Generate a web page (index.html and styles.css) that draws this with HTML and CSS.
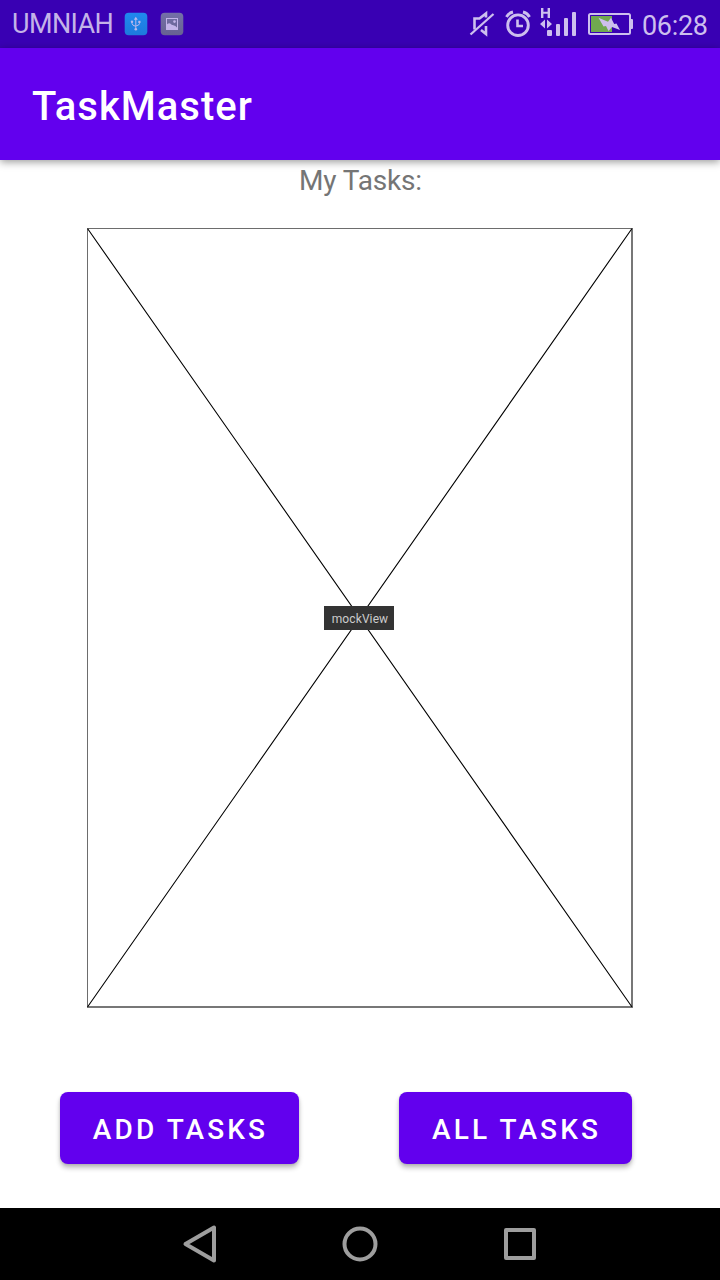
FILE: index.html
```html
<!DOCTYPE html>
<html lang="en">
<head>
<meta charset="utf-8">
<title>TaskMaster</title>
<link rel="stylesheet" href="styles.css">
</head>
<body>
<div class="screen">
  <header class="status">
    <span class="carrier">UMNIAH</span>
    <svg class="notice usb" width="24" height="24" viewBox="0 0 24 24">
      <defs><linearGradient id="blue" x2="0" y2="1"><stop stop-color="#2089ee"/><stop offset="1" stop-color="#1d79dd"/></linearGradient></defs>
      <rect x=".7" y=".7" width="22.6" height="22.6" rx="4" fill="url(#blue)"/>
      <path d="M11.8 6v11M8 9v2.4q0 2 3.8 3M15.5 10v1.4q0 2-3.7 2.6" fill="none" stroke="#b8b8ed" stroke-width="1"/>
      <path d="M11.8 4.7l2 3h-4z" fill="#b8b8ed"/><circle cx="8" cy="9.800" r="1.200" fill="#b8b8ed"/><rect x="14.300" y="8.800" width="2.200" height="2.200" fill="#b8b8ed"/><circle cx="11.800" cy="17.300" r="1.300" fill="#b8b8ed"/>
    </svg>
    <svg class="notice" width="24" height="24" viewBox="0 0 24 24">
      <defs><linearGradient id="gray" x2="0" y2="1"><stop stop-color="#7470a8"/><stop offset="1" stop-color="#676292"/></linearGradient></defs>
      <rect x=".7" y=".7" width="22.600" height="22.600" rx="4" fill="url(#gray)"/>
      <rect x="6.500" y="6.500" width="11" height="11" fill="none" stroke="#c3b4e9"/>
      <path d="M6 13.500q3-4 6-.500q3-.500 6 3.500v1.500H6z" fill="#c3b4e9"/><circle cx="14.500" cy="9.600" r="1.300" fill="#c3b4e9"/>
    </svg>
    <svg class="tray" width="170" height="48" viewBox="466 0 170 48">
      <g fill="none" stroke="#cdbfee" stroke-width="2.600">
        <path d="M470.500 34.500L493.500 14" stroke-width="2.300"/>
        <path d="M474.500 29.500V18.500h5L486 13.500v4M486 26V34L481 30"/>
        <circle cx="518" cy="25.200" r="10.300" stroke-width="2.900"/>
        <path d="M517.500 19.500V26h5.500" stroke-width="2.600"/>
        <path d="M506.500 17Q508.500 13 513 12M529.500 17Q527.500 13 523 12" stroke-width="2.900"/>
      </g>
      <g fill="#cdbfee">
        <path d="M541 8h2.400v3.800h4.200V8h2.400v10h-2.400v-4.200h-4.200V18H541z"/>
        <path d="M540 24l5-4.500v9zM552 24l-5-4.500v9z"/>
        <rect x="547" y="30" width="5" height="6" rx="1"/>
        <rect x="556" y="24" width="4" height="12" rx="1"/>
        <rect x="564" y="18" width="4" height="18" rx="1"/>
        <rect x="572" y="12" width="4" height="24" rx="1"/>
        <path d="M630.500 19h1.500q1 0 1 1v8q0 1-1 1h-1.500z"/>
      </g>
      <rect x="589" y="14" width="41" height="20" rx="1.500" fill="none" stroke="#cdbfee" stroke-width="2"/>
      <rect x="591" y="16" width="21" height="16" fill="#70a84f"/>
      <path d="M598.500 17.800l9.500 4 3-4 3.200 6.200 2.300-.500 3.500 6.500-8-3-3.500 4-2.500-5-2.500.500z" fill="#cdbfee"/>
    </svg>
    <span class="clock">06:28</span>
  </header>
  <div class="appbar"><h1 class="title">TaskMaster</h1></div>
  <main class="content">
    <p class="heading">My Tasks:</p>
    <div class="mock">
      <svg class="mock-lines" width="546" height="780" viewBox="0 0 546 780">
        <path d="M.5 780V.5H546" fill="none" stroke="#6d6d6d"/>
        <path d="M545 0V779H0" fill="none" stroke="#777" stroke-width="2"/>
        <path d="M.5 .5L545 779M545 .5L.5 779" stroke="#000" stroke-width="1.100"/>
      </svg>
      <span class="mock-label">mockView</span>
    </div>
    <div class="actions">
      <button class="action add">ADD TASKS</button>
      <button class="action all">ALL TASKS</button>
    </div>
  </main>
  <nav class="navbar">
    <svg width="40" height="40" viewBox="180 1224 40 40"><path d="M185.500 1244L214 1227.500V1260.500Z"/></svg>
    <svg width="40" height="40" viewBox="340 1224 40 40"><circle cx="360" cy="1244" r="15.500"/></svg>
    <svg width="40" height="40" viewBox="500 1224 40 40"><rect x="506" y="1230" width="28" height="28"/></svg>
  </nav>
</div>
</body>
</html>
```
FILE: styles.css
```css
* {
  box-sizing: border-box;
}

body {
  margin: 0;
  font-family: Roboto, "Liberation Sans", sans-serif;
  background: #fff;
}

.screen {
  display: flex;
  flex-direction: column;
  width: 720px;
  height: 1280px;
  overflow: hidden;
}

.status {
  display: flex;
  align-items: center;
  flex: none;
  height: 48px;
  padding: 0 12px;
  background: #3900b3;
  color: #c4b3e8;
}

.carrier {
  width: 112px;
  font-size: 27px;
  line-height: 48px;
  letter-spacing: -0.6px;
}

.notice {
  flex: none;
}

.usb {
  margin-right: 12px;
}

.tray {
  flex: none;
  margin-left: auto;
}

.clock {
  width: 66px;
  margin-left: 6px;
  padding-top: 3px;
  font-size: 27px;
  line-height: 46px;
  letter-spacing: -0.3px;
  color: #cdbfee;
  white-space: nowrap;
}

.appbar {
  display: flex;
  align-items: center;
  flex: none;
  height: 112px;
  padding: 5px 32px 0;
  background: #6200ee;
  box-shadow: 0 2px 8px rgba(0, 0, 0, 0.4);
}

.title {
  margin: 0;
  color: #fff;
  font-size: 40px;
  font-weight: 500;
  letter-spacing: 1px;
}

.content {
  display: flex;
  flex: 1;
  flex-direction: column;
  align-items: center;
}

.heading {
  margin: 0;
  height: 68px;
  padding: 2px 0 0 1px;
  font-size: 28px;
  line-height: 37px;
  letter-spacing: -0.15px;
  color: #757575;
}

.mock {
  display: grid;
  flex: none;
  place-items: center;
  width: 546px;
  height: 780px;
}

.mock-lines,
.mock-label {
  grid-area: 1 / 1;
}

.mock-label {
  width: 70px;
  height: 24px;
  margin-right: 2px;
  padding-left: 2px;
  background: #333;
  color: #ccc;
  font-size: 12px;
  line-height: 26px;
  letter-spacing: 0.1px;
  text-align: center;
}

.actions {
  display: flex;
  justify-content: space-between;
  align-self: stretch;
  margin: 84px 88px 0 60px;
}

.action {
  height: 72px;
  padding: 2px 0 0 2px;
  border: 0;
  border-radius: 8px;
  background: #6200ee;
  box-shadow: 0 4px 5px rgba(0, 0, 0, 0.24), 0 1px 3px rgba(0, 0, 0, 0.12);
  color: #fff;
  font-family: inherit;
  font-size: 28px;
  font-weight: 500;
  letter-spacing: 3.1px;
}

.add {
  width: 239px;
}

.all {
  width: 233px;
}

.navbar {
  display: flex;
  justify-content: center;
  align-items: center;
  gap: 120px;
  flex: none;
  height: 72px;
  background: #000;
  fill: none;
  stroke: #9e9e9e;
  stroke-width: 4;
  stroke-linejoin: round;
}
```
